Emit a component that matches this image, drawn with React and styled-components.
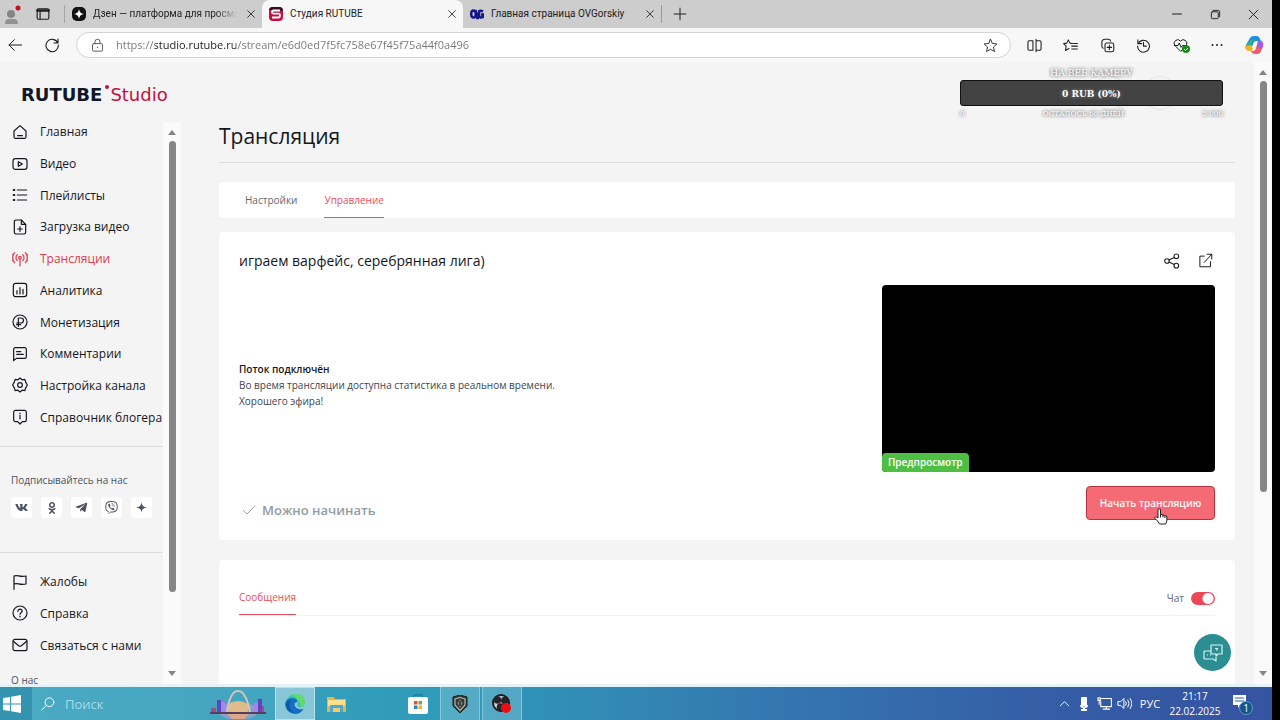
import React, { useState } from 'react'
import styled, { createGlobalStyle, css } from 'styled-components'
import { FaOdnoklassniki, FaTelegramPlane, FaViber, FaVk } from 'react-icons/fa'

const menu = [
    { icon: 'home', text: 'Главная' },
    { icon: 'video', text: 'Видео' },
    { icon: 'list', text: 'Плейлисты' },
    { icon: 'upload', text: 'Загрузка видео' },
    { icon: 'live', text: 'Трансляции', active: true },
    { icon: 'stats', text: 'Аналитика' },
    { icon: 'ruble', text: 'Монетизация' },
    { icon: 'comment', text: 'Комментарии' },
    { icon: 'gear', text: 'Настройка канала' },
    { icon: 'info', text: 'Справочник блогера' },
]

const helpMenu = [
    { icon: 'flag', text: 'Жалобы' },
    { icon: 'help', text: 'Справка' },
    { icon: 'mail', text: 'Связаться с нами' },
]

const shapes = {
    home: <><path d="M3 10.500 12 2.500l9 8V19a2.500 2.500 0 0 1-2.500 2.500h-13A2.500 2.500 0 0 1 3 19z" /><path d="M8.500 17.500h7" /></>,
    video: <><rect x="1.500" y="4" width="21" height="16" rx="3.500" /><path d="m9.500 8.500 6 3.500-6 3.500z" /></>,
    list: <><path d="M8 4.500h14M8 12h14M8 19.500h14" /><path d="M2.500 4.500h1M2.500 12h1M2.500 19.500h1" strokeWidth="3" /></>,
    upload: <><path d="M14 1.500H6A2.500 2.500 0 0 0 3.500 4v16A2.500 2.500 0 0 0 6 22.500h12a2.500 2.500 0 0 0 2.500-2.500V8z" /><path d="M14 1.500V8h6.500M12 11.500v7M8.500 15h7" /></>,
    live: <><circle cx="12" cy="10" r="2" /><path d="M12 12v10.500M8 14.500a6 6 0 0 1 0-9M16 14.500a6 6 0 0 0 0-9M4 17.500a11 11 0 0 1 0-15M20 17.500a11 11 0 0 0 0-15" /><path d="M.8 15.500a14 14 0 0 1 0-11M23.200 15.500a14 14 0 0 0 0-11" strokeWidth="1" /></>,
    stats: <><rect x="2" y="2" width="20" height="20" rx="3.500" /><path d="M7.500 13v5M12 8.500V18M16.500 11v7" /></>,
    ruble: <><circle cx="12" cy="12" r="10.500" /><path d="M9.500 18.500V6h4a3.500 3.500 0 0 1 0 7.500H7M7 16h6" /></>,
    comment: <><path d="M2.500 22V5A2.500 2.500 0 0 1 5 2.500h14A2.500 2.500 0 0 1 21.500 5v11a2.500 2.500 0 0 1-2.500 2.500H6.500z" /><path d="M7 8.500h6M7 12.500h10" /></>,
    gear: <><path d="m12 1.500 3.200 2.700 4.100-.5 1.200 4L23 12l-2.500 4.300-1.200 4-4.100-.5L12 22.500l-3.200-2.700-4.100.5-1.200-4L1 12l2.500-4.300 1.200-4 4.100.5z" /><circle cx="12" cy="12" r="3.500" /></>,
    info: <><path d="M5 2h14a2.500 2.500 0 0 1 2.500 2.500v12A2.500 2.500 0 0 1 19 19h-3.500L12 22.500 8.500 19H5a2.500 2.500 0 0 1-2.500-2.500v-12A2.500 2.500 0 0 1 5 2zM12 9.500V15M12 6v1" /></>,
    flag: <path d="M3 23V3c5-2.500 9 2.500 18 0v12c-9 2.500-13-2.500-18 0" />,
    help: <><circle cx="12" cy="12" r="10.500" /><path d="M8.800 9.500c0-4.500 6.700-4 6.400-.3-.2 2-3.200 2.300-3.200 4.800M12 16.500v1.500" /></>,
    mail: <><rect x="1.500" y="3.500" width="21" height="17" rx="3" /><path d="m2 6.500 8 6.500q2 1.500 4 0l8-6.500" /></>,
    back: <path d="M22 12H3M11 4l-8 8 8 8" />,
    reload: <path d="M20.500 8.500A9.300 9.300 0 1 0 21.500 12M21 3v6h-6" />,
    lock: <><rect x="4" y="9" width="16" height="12" rx="2" /><path d="M8 9V6a4 4 0 0 1 8 0v3M12 14.500v1" /></>,
    star: <path d="m12 2 3 6.700 7.200.8-5.400 4.900 1.500 7.200L12 18l-6.300 3.600 1.500-7.200-5.400-4.900 7.200-.8z" />,
    split: <path d="M9.500 4.500h-6a2 2 0 0 0-2 2v11a2 2 0 0 0 2 2h6zM14.500 4.500h6a2 2 0 0 1 2 2v11a2 2 0 0 1-2 2h-6M14.500 2v20" />,
    favorites: <path d="m15.500 8.700-4.500-.5L8.500 3 6 8.200l-5 .8 4 4-1 7 5.500-3.200M17 8.700h6M14 13h9M14 17.500h9" />,
    collections: <><rect x="8" y="8" width="14" height="14" rx="3" /><path d="M15 11.500v7M11.500 15h7M5 16.500a4 4 0 0 1-2-4V6.500A4.500 4.500 0 0 1 7.500 2H13a4 4 0 0 1 4 3" /></>,
    history: <path d="M3 3v6h6M3.500 9A9.500 9.500 0 1 1 2.500 13M12 7v6h4.500" />,
    heart: <path d="M12 21 3 12a5.500 5.500 0 0 1 9-7 5.500 5.500 0 0 1 9 7zM2 12h6l2-4 3 7 2-3h6" />,
    share: <><circle cx="4.500" cy="12" r="3.500" /><circle cx="18.500" cy="5" r="3.500" /><circle cx="18.500" cy="19" r="3.500" /><path d="m7.600 10.500 7.800-3.900M7.600 13.500l7.800 3.900" /></>,
    open: <path d="M10 5H3v17h17v-8M10 15 22 2M14.500 2H22v7.500" />,
    check: <path d="m2 12.500 6.500 6.500L22 5" />,
    close: <path d="m4 4 16 16M20 4 4 20" />,
    plus: <path d="M12 2v20M2 12h20" />,
    minimize: <path d="M3 12h18" />,
    restore: <><rect x="3" y="6" width="15" height="15" rx="2" /><path d="M7 3h11a3 3 0 0 1 3 3v11" /></>,
    search: <><circle cx="14.500" cy="9" r="7.500" /><path d="m9 14.500-8 8" /></>,
    up: <path d="m3 17 9-9 9 9" />,
    monitor: <><path d="M7 4h16v13H6V9M10 21h10M15 17v4" /><path d="M1.500 3h4v4h-4zM3.500 7v6" /></>,
    sound: <path d="M2 9h4l5-5v16l-5-5H2zM14 9q2 3 0 6M17.500 6.500q4 5.500 0 11M21 4q5.500 8 0 16" />,
    windows: <><rect x="2" y="3" width="20" height="18" rx="2" /><path d="M2 6h20" strokeWidth="4" /><path d="M7 6v15" /></>,
}

function Icon({ name, size = 16, weight = 1.7 }) {
    return (
        <Svg width={size} height={size} viewBox="0 0 24 24" strokeWidth={weight} aria-hidden="true">
            {shapes[name]}
        </Svg>
    )
}

function Menu({ items, height }) {
    return (
        <MenuList $height={height}>
            {items.map(item => (
                <li key={item.text}>
                    <MenuLink href="#" $active={item.active}>
                        <Icon name={item.icon} weight={1.8} />
                        {item.text}
                    </MenuLink>
                </li>
            ))}
        </MenuList>
    )
}

function Scroll({ thumb, inset }) {
    return (
        <Track $inset={inset}>
            <Arrow />
            <Thumb $height={thumb} />
            <Arrow $down />
        </Track>
    )
}

function Browser() {
    const [url, setUrl] = useState('https://studio.rutube.ru/stream/e6d0ed7f5fc758e67f45f75a44f0a496')
    return (
        <>
            <TabStrip>
                <Profile aria-label="Профиль">
                    <svg width="20" height="22" viewBox="0 0 20 22">
                        <circle cx="10" cy="11" r="4" fill="#858585" />
                        <path d="M4 21q0-5 4-5h5q4 0 4 5z" fill="#929292" />
                        <circle cx="17" cy="5" r="2.500" fill="#c50f1f" />
                    </svg>
                </Profile>
                <IconButton $width={42} aria-label="Вкладки"><Icon name="windows" size={14} weight={2} /></IconButton>
                <BrowserTab $width={198} $line>
                    <svg width="14" height="14" viewBox="0 0 14 14">
                        <rect width="14" height="14" rx="5" fill="#111" />
                        <path d="M7 2q.5 4.500 5 5-4.500.5-5 5-.5-4.500-5-5 4.500-.5 5-5z" fill="#fff" />
                    </svg>
                    <TabTitle $fade>Дзен — платформа для просмо</TabTitle>
                    <IconButton $width={14} aria-label="Закрыть"><Icon name="close" size={10} weight={2} /></IconButton>
                </BrowserTab>
                <BrowserTab $width={201} $active>
                    <svg width="14" height="14" viewBox="0 0 14 14">
                        <rect width="14" height="14" rx="4" fill="#c8103f" />
                        <path d="M0 3q0-3 4-3h6q4 0 4 4L9 3z" fill="#3a0a2a" />
                        <path d="M11 3.500H4.500Q3 3.500 3 5t1.500 1.700h5q1.500 0 1.500 1.800t-1.500 2H3" fill="none" stroke="#fff" strokeWidth="1.800" />
                    </svg>
                    <TabTitle>Студия RUTUBE</TabTitle>
                    <IconButton $width={14} aria-label="Закрыть"><Icon name="close" size={10} weight={2} /></IconButton>
                </BrowserTab>
                <BrowserTab $width={199} $lineAfter>
                    <svg width="14" height="14" viewBox="0 0 14 14" fill="none" stroke="#14148c" strokeWidth="2.500">
                        <ellipse cx="3.500" cy="7" rx="2.300" ry="3.500" />
                        <path d="m5.500 3 2 9 2-9M13 4.500q-4-2.500-4 2.500t4 3V7.500h-2" />
                    </svg>
                    <TabTitle>Главная страница OVGorskiy</TabTitle>
                    <IconButton $width={14} aria-label="Закрыть"><Icon name="close" size={10} weight={2} /></IconButton>
                </BrowserTab>
                <IconButton $width={36} aria-label="Новая вкладка"><Icon name="plus" size={14} weight={1.7} /></IconButton>
                <Spacer />
                <IconButton $width={38} aria-label="Свернуть"><Icon name="minimize" size={12} weight={2} /></IconButton>
                <IconButton $width={38} aria-label="Окно"><Icon name="restore" size={11} weight={2} /></IconButton>
                <IconButton $width={38} aria-label="Закрыть окно"><Icon name="close" size={13} weight={1.7} /></IconButton>
            </TabStrip>
            <Toolbar>
                <IconButton $width={30} aria-label="Назад"><Icon name="back" weight={1.5} /></IconButton>
                <IconButton $width={44} aria-label="Обновить"><Icon name="reload" weight={1.7} /></IconButton>
                <AddressBar>
                    <Icon name="lock" size={15} weight={1.5} />
                    <Url aria-label="Адрес" value={url} onChange={e => setUrl(e.target.value)} />
                    <IconButton $width={36} aria-label="В избранное"><Icon name="star" size={15} weight={1.4} /></IconButton>
                </AddressBar>
                <Tools>
                    <IconButton $width={36} aria-label="Разделить"><Icon name="split" size={15} /></IconButton>
                    <IconButton $width={36} aria-label="Избранное"><Icon name="favorites" size={15} /></IconButton>
                    <IconButton $width={36} aria-label="Коллекции"><Icon name="collections" size={15} /></IconButton>
                    <IconButton $width={36} aria-label="Журнал"><Icon name="history" size={15} /></IconButton>
                    <IconButton $width={36} aria-label="Производительность">
                        <Icon name="heart" size={15} weight={1.6} />
                        <Ok>
                            <svg width="8" height="8" viewBox="0 0 8 8">
                                <circle cx="4" cy="4" r="4" fill="#1a8a1a" />
                                <path d="m2 4 1.500 1.500L6 3" fill="none" stroke="#fff" />
                            </svg>
                        </Ok>
                    </IconButton>
                    <IconButton $width={36} aria-label="Ещё">
                        <svg width="12" height="4" viewBox="0 0 12 4" fill="#222"><circle cx="1.500" cy="2" r="1" /><circle cx="6" cy="2" r="1" /><circle cx="10.500" cy="2" r="1" /></svg>
                    </IconButton>
                    <IconButton $width={36} aria-label="Copilot">
                        <svg width="20" height="20" viewBox="0 0 20 20">
                            <path d="M6 3q1-2 4-2h3q2 0 3 3l1 2h-5l-2 1-2 7H3q-2-1-1-4z" fill="#1f8fe0" />
                            <path d="M2 10q1 5 4 4l2-7 3-2H7z" fill="#36b37e" />
                            <path d="M1 11q0 5 4 5h3l2-6z" fill="#f0b429" />
                            <path d="m14 6 3 0q3 1 2 5l-2 5q-1 3-4 3h-2q-3 0-4-3h3q1 0 2-3z" fill="#ee5a6f" />
                            <path d="M14 6h3q3 1 2 5l-1 3-5-2z" fill="#a45de0" />
                            <path d="M12 7h-2l-2 6h2z" fill="#fff" />
                        </svg>
                    </IconButton>
                </Tools>
            </Toolbar>
        </>
    )
}

function Sidebar() {
    return (
        <Side>
            <SideContent>
                <Menu items={menu} height={317} />
                <Follow>
                    <FollowTitle>Подписывайтесь на нас</FollowTitle>
                    <Socials>
                        <Social href="#" aria-label="ВКонтакте"><FaVk size={13} /></Social>
                        <Social href="#" aria-label="Одноклассники"><FaOdnoklassniki size={12} /></Social>
                        <Social href="#" aria-label="Telegram"><FaTelegramPlane size={13} /></Social>
                        <Social href="#" aria-label="Viber"><FaViber size={13} /></Social>
                        <Social href="#" aria-label="Дзен">
                            <svg width="11" height="11" viewBox="0 0 12 12" fill="currentColor"><path d="M6 0q.2 5.800 6 6-5.800.2-6 6-.2-5.800-6-6 5.800-.2 6-6z" /></svg>
                        </Social>
                    </Socials>
                </Follow>
                <Menu items={helpMenu} height={95} />
                <About href="#">О нас</About>
            </SideContent>
            <Scroll thumb={451} inset={6} />
        </Side>
    )
}

function Donation() {
    return (
        <Goal>
            <GoalTitle>НА ВЕБ КАМЕРУ</GoalTitle>
            <GoalBar>0 RUB (0%)</GoalBar>
            <GoalFoot>
                <span>0</span>
                <span>ОСТАЛОСЬ 66 ДНЕЙ</span>
                <span>5 000</span>
            </GoalFoot>
        </Goal>
    )
}

function Stream() {
    const [chat, setChat] = useState(true)
    return (
        <Main>
            <Title>Трансляция</Title>
            <TabsCard>
                <Tab>Настройки</Tab>
                <Tab $active>Управление</Tab>
            </TabsCard>
            <Card>
                <CardHead>
                    <h2>играем варфейс, серебрянная лига)</h2>
                    <IconButton $width={20} aria-label="Поделиться"><Icon name="share" weight={1.6} /></IconButton>
                    <IconButton $width={20} aria-label="Открыть"><Icon name="open" size={15} weight={1.6} /></IconButton>
                </CardHead>
                <CardBody>
                    <Message>
                        <h3>Поток подключён</h3>
                        <p>Во время трансляции доступна статистика в реальном времени.<br />Хорошего эфира!</p>
                    </Message>
                    <Preview><Badge>Предпросмотр</Badge></Preview>
                </CardBody>
                <CardFoot>
                    <Status><Icon name="check" size={14} weight={1.7} />Можно начинать</Status>
                    <StartButton>
                        Начать трансляцию
                        <Pointer width="14" height="17" viewBox="0 0 14 17">
                            <path d="M4 9V2q0-1.300 1.200-1.300T6.500 2v4.500q2-.6 2.400.6 1.700-.5 2 .7 2-.4 2 1.200v3q0 2-1.300 4H5.500Q4 13 1 10.500q-.5-1 .5-1.500T4 10z" fill="#fff" stroke="#222" strokeWidth="1" />
                            <path d="M6.500 6.500v3M8.900 7v2.500M10.900 7.800V10" stroke="#222" strokeWidth="1" />
                        </Pointer>
                    </StartButton>
                </CardFoot>
            </Card>
            <ChatCard>
                <ChatHead>
                    <Tab $active>Сообщения</Tab>
                    <ChatLabel>
                        Чат
                        <Switch type="checkbox" checked={chat} onChange={e => setChat(e.target.checked)} />
                    </ChatLabel>
                </ChatHead>
            </ChatCard>
        </Main>
    )
}

function Taskbar() {
    return (
        <Task>
            <StartMenu $width={32} aria-label="Пуск">
                <svg width="18" height="18" viewBox="0 0 18 18" fill="#fff"><path d="M0 3l7-1v6.500H0zM8 1.800 18 0v8.500H8zM0 9.500h7V16l-7-1zM8 9.500h10V18L8 16.200z" /></svg>
            </StartMenu>
            <Search>
                <Icon name="search" size={14} weight={1.7} />
                <input type="text" placeholder="Поиск" aria-label="Поиск" />
                <svg width="56" height="30" viewBox="0 0 56 30">
                    <ellipse cx="28" cy="22" rx="20" ry="9" fill="#c8a0d8" opacity=".5" />
                    <ellipse cx="28" cy="19" rx="11" ry="7" fill="#f5c27a" opacity=".8" />
                    <path d="M1 23v-4h5v4zM50 23v-6h4v6z" fill="#a34f7c" />
                    <path d="M7 11h4v13H7zM48 10h4v14h-4z" fill="#5b46c0" />
                    <path d="M11 13h4v11h-4zM44 14h4v10h-4z" fill="#a884ea" />
                    <path d="M17 23Q20 2 28 2t12 21" fill="none" stroke="#d2c3bd" strokeWidth="2" />
                    <path d="M0 24h56" stroke="#5a3c5c" strokeWidth="2" />
                    <path d="M17 25h22l-5 5H22z" fill="#f0a97c" opacity=".8" />
                </svg>
            </Search>
            <TaskButton $width={40} $open $front aria-label="Microsoft Edge">
                <svg width="20" height="20" viewBox="0 0 20 20">
                    <path d="M1 8Q3 0 11 0t9 8q0 5-5 5-3 0-3-2 2-3-1-5T1 8z" fill="#35c7a5" />
                    <path d="M11 0q8 0 9 8 0 4-4 5-2-9-9-12z" fill="#67d86a" />
                    <path d="M0 10Q1 4 7 4q5 0 5.500 4-3 0-3 3 1 5 9 4-3 5-8 5-10-1-10.500-10z" fill="#176fc4" />
                    <path d="M7 6Q3 9 5 14t7 6Q2 19 1 11q1-5 6-5z" fill="#0d58a8" />
                </svg>
            </TaskButton>
            <TaskButton $width={42} aria-label="Проводник">
                <svg width="19" height="16" viewBox="0 0 19 16"><path d="M0 1h7l1 2h11v13H0z" fill="#e8b63c" /><path d="M1 4h17v6H1z" fill="#ffe08a" /><path d="M3 16V9h13v7h-3v-4H6v4z" fill="#4aa7e0" /><path d="M6 12h7v4H6z" fill="#f6cd5c" /></svg>
            </TaskButton>
            <TaskButton $width={41} aria-label="Пустая кнопка" />
            <TaskButton $width={40} aria-label="Microsoft Store">
                <svg width="20" height="20" viewBox="0 0 20 20"><path d="M6 3V1h8v2" fill="none" stroke="#1b7ea8" strokeWidth="1.500" /><rect y="3" width="20" height="17" rx="2" fill="#fff" /><path d="M6 7h3.500v3.500H6z" fill="#d9542c" /><path d="M10.500 7H14v3.500h-3.500z" fill="#6fae3c" /><path d="M6 11.500h3.500V15H6z" fill="#2b86c9" /><path d="M10.500 11.500H14V15h-3.500z" fill="#efb52d" /></svg>
            </TaskButton>
            <Running>
                <TaskButton $width={40} $open aria-label="Warface">
                    <svg width="16" height="18" viewBox="0 0 16 18"><path d="M8 0 15 2v9l-7 7-7-7V2z" fill="#333a36" stroke="#1b1f1d" /><path d="M8 2.500 13 4v6l-5 5.500L3 10V4z" fill="none" stroke="#a9ada4" strokeWidth="1.300" /><path d="M8 4.500 10.500 8 8 13 5.500 8z" fill="#8d918a" /><path d="M8 6v5" stroke="#222" strokeWidth="1.500" /></svg>
                </TaskButton>
                <TaskButton $width={40} $open aria-label="OBS">
                    <svg width="20" height="20" viewBox="0 0 20 20"><circle cx="9" cy="9" r="8" fill="#d2d2d6" stroke="#1c1b20" strokeWidth="2" /><circle cx="5.500" cy="6" r="3.800" fill="#25242a" /><circle cx="12.800" cy="6.500" r="3.800" fill="#25242a" /><circle cx="8.500" cy="13" r="3.800" fill="#25242a" /><circle cx="14" cy="14" r="5" fill="#f00c12" /></svg>
                </TaskButton>
            </Running>
            <Spacer />
            <Tray>
                <TaskButton $width={20} aria-label="Скрытые значки"><Icon name="up" size={11} weight={2} /></TaskButton>
                <TaskButton $width={20} aria-label="Микрофон">
                    <svg width="10" height="14" viewBox="0 0 10 14" fill="#fff"><rect x="2" width="6" height="9" rx="1" /><path d="M1 8h1q3 3 6 0h1q0 3-3 3v1h2v2H2v-2h2v-1q-3 0-3-3z" /></svg>
                </TaskButton>
                <TaskButton $width={20} aria-label="Сеть"><Icon name="monitor" size={15} weight={1.7} /></TaskButton>
                <TaskButton $width={20} aria-label="Звук"><Icon name="sound" size={15} weight={1.6} /></TaskButton>
                <TaskButton $width={32} aria-label="Язык">РУС</TaskButton>
                <Clock><span>21:17</span><span>22.02.2025</span></Clock>
                <TaskButton $width={38} aria-label="Уведомления">
                    <svg width="22" height="22" viewBox="0 0 22 22">
                        <path d="M1 2h13v10H8l-2 3v-3H1z" fill="#fff" />
                        <path d="M3 5h9M3 8h9" stroke="#3458a3" />
                        <circle cx="14" cy="15" r="6.500" fill="#14568c" stroke="#5d9cc4" strokeWidth="1" />
                        <text x="14" y="19" fontSize="10" fill="#fff" textAnchor="middle">1</text>
                    </svg>
                </TaskButton>
            </Tray>
        </Task>
    )
}

function App() {
    return (
        <Screen>
            <Global />
            <Browser />
            <Page>
                <Content>
                    <Header>
                        <Logo href="#">RUTUBE<LogoDot /><span>Studio</span></Logo>
                        <RoundButton aria-label="Уведомления" />
                        <RoundButton aria-label="Аккаунт" />
                    </Header>
                    <Columns>
                        <Sidebar />
                        <Stream />
                    </Columns>
                    <Donation />
                    <Support aria-label="Поддержка">
                        <svg width="20" height="18" viewBox="0 0 20 18" fill="none" stroke="#d6f2f2" strokeWidth="1.200" strokeLinejoin="round">
                            <path d="M8 1h11v9h-4l-2 2v-2H8z" />
                            <path d="M8 7H2q-1 0-1 1v6q0 1 1 1h8l3 2v-4M4 11h1M7 11h1" />
                            <path d="M12 4.500h2.500l-1 2" />
                        </svg>
                    </Support>
                </Content>
                <Scroll thumb={411} />
            </Page>
            <Taskbar />
        </Screen>
    )
}

export default App

const Global = createGlobalStyle`
* {
    box-sizing: border-box;
}
body {
    margin: 0;
    background-color: #000000;
    overflow: hidden;
}
body, button, input {
    font-family: "Open Sans", "Noto Sans", sans-serif;
    font-size: 12px;
}
h1, h2, h3, p, ul {
    margin: 0;
    padding: 0;
    list-style: none;
}
a {
    color: inherit;
    text-decoration: none;
}
button {
    border: none;
    background: none;
    padding: 0;
    color: inherit;
}
`;

const Svg = styled.svg`
fill: none;
stroke: currentColor;
stroke-linecap: round;
stroke-linejoin: round;
flex: none;
`;

const Screen = styled.div`
display: flex;
flex-direction: column;
height: 100vh;
padding-right: 8px;
`;

const Spacer = styled.div`
flex: 1;
`;

const IconButton = styled.button`
display: flex;
align-items: center;
justify-content: center;
position: relative;
flex: none;
width: ${p => p.$width}px;
height: 24px;
color: #1f1f1f;
`;

const Ok = styled.i`
display: flex;
position: absolute;
right: 9px;
bottom: 4px;
`;

const TabStrip = styled.div`
display: flex;
align-items: center;
flex: none;
height: 28px;
background-color: #cdcdcd;
`;

const Profile = styled(IconButton)`
width: 22px;
`;

const BrowserTab = styled.div`
display: flex;
align-items: center;
gap: 7px;
flex: none;
width: ${p => p.$width}px;
height: 100%;
padding: 0 4px 0 7px;
border-radius: 8px 8px 0 0;
${p => p.$active && css`background-color: #f7f7f7;`}
${p => p.$line && css`
    height: 18px;
    border-left: 1px solid #a5a5a5;
    border-radius: 0;
`}
${p => p.$lineAfter && css`
    height: 18px;
    border-right: 1px solid #999999;
    border-radius: 0;
`}
`;

const TabTitle = styled.span`
flex: 1;
overflow: hidden;
white-space: nowrap;
font-family: Roboto, sans-serif;
font-size: 10px;
line-height: 16px;
color: #222222;
${p => p.$fade && css`mask-image: linear-gradient(90deg, #000 85%, transparent);`}
`;

const Toolbar = styled.div`
display: flex;
align-items: center;
flex: none;
height: 34px;
background-color: #f7f7f7;
`;

const AddressBar = styled.div`
display: flex;
align-items: center;
flex: 1;
height: 26px;
margin-left: 2px;
padding: 0 2px 0 13px;
border: 1px solid #d4d4d4;
border-radius: 13px;
background-color: #ffffff;
color: #555555;
`;

const Url = styled.input`
flex: 1;
min-width: 0;
margin-left: 11px;
padding: 0 0 2px;
border: none;
outline: none;
font-size: 11px;
color: #767676;
background: linear-gradient(90deg, #767676 39px, #1c1c1c 39px, #1c1c1c 120px, #767676 120px);
background-clip: text;
-webkit-text-fill-color: transparent;
`;

const Tools = styled.div`
display: flex;
justify-content: space-between;
width: 256px;
margin-left: 5px;
`;

const Page = styled.div`
display: flex;
flex: 1;
min-height: 0;
background-color: #f4f4f4;
border-bottom: 3px solid #e4f3f7;
`;

const Content = styled.div`
display: flex;
flex-direction: column;
flex: 1;
min-width: 0;
position: relative;
overflow: hidden;
`;

const Header = styled.header`
display: flex;
align-items: center;
gap: 16px;
flex: none;
height: 54px;
padding: 8px 77px 0 21px;
`;

const Logo = styled.a`
display: flex;
align-items: center;
flex: 1;
padding-top: 3px;
font-family: "DejaVu Sans", sans-serif;
font-size: 18px;
line-height: 20px;
font-weight: bold;
color: #101828;
>span{
    font-weight: normal;
    color: #c0123f;
}
`;

const LogoDot = styled.i`
align-self: flex-start;
width: 4px;
height: 4px;
margin: 0 1px 0 3px;
border-radius: 50%;
background-color: #c0123f;
`;

const RoundButton = styled.button`
width: 34px;
height: 34px;
border: 1px solid #e4e4e4;
border-radius: 50%;
`;

const Columns = styled.div`
display: flex;
flex: 1;
min-height: 0;
`;

const Side = styled.aside`
display: flex;
flex: none;
width: 181px;
`;

const SideContent = styled.div`
flex: 1;
min-width: 0;
overflow: hidden;
white-space: nowrap;
`;

const MenuList = styled.ul`
display: grid;
grid-auto-rows: 1fr;
height: ${p => p.$height}px;
`;

const MenuLink = styled.a`
display: flex;
align-items: center;
gap: 12px;
height: 100%;
padding-left: 12px;
font-size: 12px;
font-weight: 500;
color: ${p => p.$active ? '#dc3c4c' : '#15171c'};
`;

const Follow = styled.div`
height: 107px;
margin: 13px 0;
padding: 25px 0 0 11px;
border: solid #dedede;
border-width: 1px 0;
`;

const FollowTitle = styled.p`
font-size: 10px;
line-height: 16px;
font-weight: 500;
color: #4c5260;
`;

const Socials = styled.div`
display: flex;
gap: 9px;
margin-top: 9px;
`;

const Social = styled.a`
display: flex;
align-items: center;
justify-content: center;
width: 21px;
height: 21px;
border-radius: 3px;
background-color: #ffffff;
color: #4c5260;
`;

const About = styled.a`
display: block;
margin-top: 11px;
padding-left: 11px;
font-size: 10px;
line-height: 16px;
color: #4c5260;
`;

const Track = styled.div`
display: flex;
flex-direction: column;
align-items: center;
flex: none;
width: 18px;
margin-top: ${p => p.$inset || 0}px;
padding: 8px 0;
background-color: #fafafa;
`;

const Arrow = styled.i`
border: solid transparent;
border-width: 0 4px 5px;
border-bottom-color: #858585;
${p => p.$down && css`
    margin-top: auto;
    transform: rotate(180deg);
`}
`;

const Thumb = styled.div`
flex: none;
width: 7px;
height: ${p => p.$height}px;
margin-top: 6px;
border-radius: 4px;
background-color: #868686;
`;

const Main = styled.main`
flex: 1;
min-width: 0;
padding: 6px 19px 0 38px;
`;

const Title = styled.h1`
height: 41px;
border-bottom: 1px solid #dedede;
font-size: 21px;
line-height: 28px;
font-weight: 500;
color: #15171c;
`;

const Card = styled.section`
margin-top: 14px;
padding: 0 20px 20px;
border-radius: 4px;
background-color: #ffffff;
`;

const TabsCard = styled(Card)`
display: flex;
gap: 27px;
margin-top: 19px;
padding: 0 26px;
`;

const Tab = styled.button`
height: 36px;
border-bottom: 1px solid ${p => p.$active ? '#e8505e' : 'transparent'};
font-size: 10px;
color: ${p => p.$active ? '#e8505e' : '#62666f'};
`;

const CardHead = styled.div`
display: flex;
align-items: center;
gap: 13px;
height: 53px;
padding-top: 4px;
>h2{
    flex: 1;
    font-size: 14px;
    line-height: 20px;
    font-weight: 500;
    color: #15171c;
}
`;

const CardBody = styled.div`
display: flex;
align-items: center;
`;

const Message = styled.div`
flex: 1;
padding-top: 12px;
font-size: 10px;
line-height: 16px;
color: #3e434d;
>h3{
    font-size: 10px;
    font-weight: 600;
    color: #15171c;
}
`;

const Preview = styled.div`
display: flex;
align-items: flex-end;
width: 333px;
height: 187px;
border-radius: 4px;
background-color: #000000;
overflow: hidden;
`;

const Badge = styled.span`
padding: 0 6px;
border-radius: 4px 4px 0 0;
background-color: #4fbf43;
font-size: 10px;
line-height: 19px;
font-weight: 600;
color: #ffffff;
`;

const CardFoot = styled.div`
display: flex;
align-items: center;
justify-content: space-between;
margin-top: 14px;
`;

const Status = styled.p`
display: flex;
align-items: center;
gap: 6px;
padding: 14px 0 0 3px;
font-size: 13px;
line-height: 20px;
font-weight: 600;
color: #929ca5;
`;

const StartButton = styled.button`
position: relative;
width: 129px;
height: 34px;
border: 1px solid #b8323f;
border-radius: 4px;
background-color: #f46b75;
font-size: 10px;
font-weight: 600;
color: #ffffff;
`;

const Pointer = styled.svg`
position: absolute;
right: 46px;
bottom: -6px;
`;

const ChatCard = styled(Card)`
height: 200px;
margin-top: 20px;
`;

const ChatHead = styled.div`
display: flex;
align-items: flex-end;
justify-content: space-between;
height: 56px;
border-bottom: 1px solid #f3f3f3;
`;

const ChatLabel = styled.label`
display: flex;
align-items: center;
gap: 7px;
height: 34px;
font-size: 10px;
color: #62666f;
`;

const Switch = styled.input`
appearance: none;
width: 24px;
height: 13px;
margin: 0;
border-radius: 7px;
background: radial-gradient(circle at 17px 50%, #ffffff 5px, #ee4756 6px);
`;

const Goal = styled.div`
position: absolute;
top: 4px;
right: 31px;
width: 263px;
font-family: "DejaVu Serif Condensed", "DejaVu Serif", serif;
text-align: center;
color: #ffffff;
text-shadow: 0 0 3px #555555, 0 0 4px #888888;
`;

const GoalTitle = styled.p`
font-size: 10px;
line-height: 14px;
`;

const GoalBar = styled.p`
height: 26px;
border: 1px solid #111111;
border-radius: 3px;
background-color: #424242;
font-size: 10px;
line-height: 26px;
font-weight: bold;
`;

const GoalFoot = styled.div`
display: flex;
justify-content: space-between;
font-size: 8px;
line-height: 16px;
`;

const Support = styled.button`
display: flex;
align-items: center;
justify-content: center;
position: absolute;
right: 23px;
bottom: 13px;
width: 37px;
height: 37px;
border-radius: 50%;
background-color: #2b8e92;
`;

const Task = styled.footer`
display: flex;
align-items: stretch;
flex: none;
height: 33px;
background: linear-gradient(90deg, #3ea4c0, #2f9bb9 35%, #3478b0 60%, #355fa8 80%, #3553a0);
color: #ffffff;
`;

const TaskButton = styled.button`
display: flex;
align-items: center;
justify-content: center;
flex: none;
width: ${p => p.$width}px;
font-size: 11px;
${p => p.$open && css`
    border: solid rgba(255, 255, 255, 0.3);
    border-width: 0 1px;
    background-color: rgba(255, 255, 255, 0.18);
`}
${p => p.$front && css`
    border: 1px solid #b7e3ea;
    background-color: rgba(255, 255, 255, 0.42);
`}
`;

const StartMenu = styled(TaskButton)`
justify-content: flex-start;
padding-left: 3px;
background-color: rgba(0, 60, 90, 0.15);
`;

const Running = styled.div`
display: flex;
gap: 2px;
margin-left: 2px;
`;

const Search = styled.label`
display: flex;
align-items: center;
width: 243px;
padding: 0 9px;
background-color: rgba(255, 255, 255, 0.07);
>input{
    flex: 1;
    min-width: 0;
    border: none;
    outline: none;
    padding: 0 0 0 10px;
    background: none;
    font-size: 13px;
    color: #ffffff;
}
>input::placeholder{
    color: #a3dbe8;
    opacity: 1;
}
`;

const Tray = styled.div`
display: flex;
margin-right: 10px;
`;

const Clock = styled.time`
display: flex;
flex-direction: column;
align-items: center;
justify-content: center;
width: 58px;
font-size: 10px;
line-height: 15px;
`;
